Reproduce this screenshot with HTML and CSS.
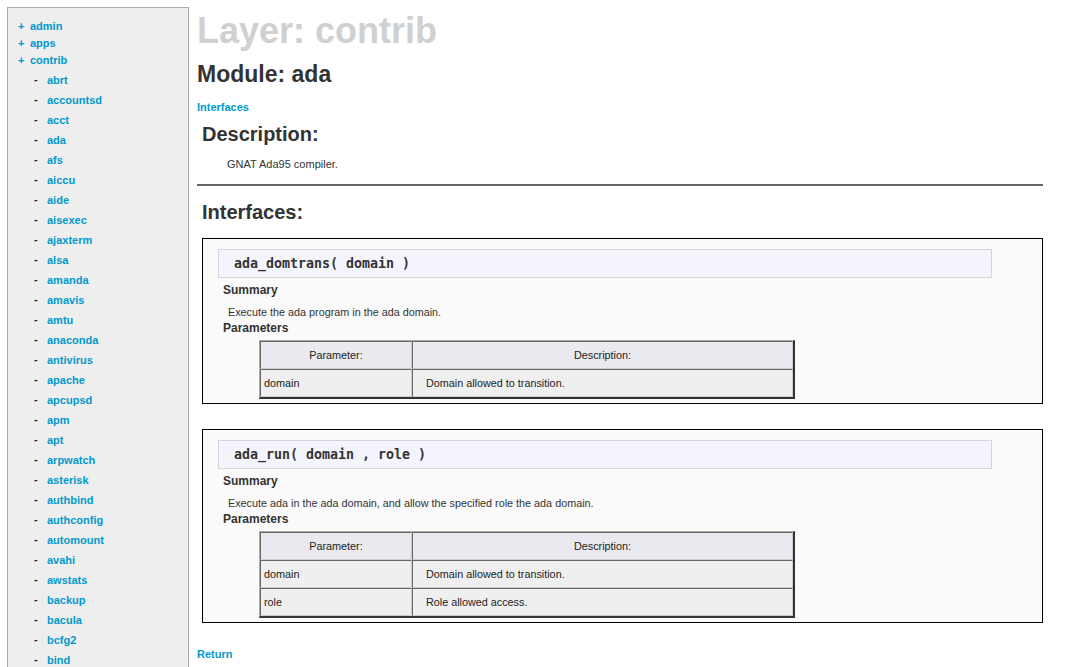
FILE: index.html
```
<!DOCTYPE html>
<html>
<head>
<meta charset="utf-8">
<title>Layer: contrib - Module: ada</title>
<link rel="stylesheet" href="styles.css">
</head>
<body>
<div class="page">
  <div class="nav">
    <ul class="top">
      <li><span class="plus">+</span><a href="#">admin</a></li>
      <li><span class="plus">+</span><a href="#">apps</a></li>
      <li><span class="plus">+</span><a href="#">contrib</a>
        <ul class="sub">
          <li><span class="dash">-</span><a href="#">abrt</a></li>
          <li><span class="dash">-</span><a href="#">accountsd</a></li>
          <li><span class="dash">-</span><a href="#">acct</a></li>
          <li><span class="dash">-</span><a href="#">ada</a></li>
          <li><span class="dash">-</span><a href="#">afs</a></li>
          <li><span class="dash">-</span><a href="#">aiccu</a></li>
          <li><span class="dash">-</span><a href="#">aide</a></li>
          <li><span class="dash">-</span><a href="#">aisexec</a></li>
          <li><span class="dash">-</span><a href="#">ajaxterm</a></li>
          <li><span class="dash">-</span><a href="#">alsa</a></li>
          <li><span class="dash">-</span><a href="#">amanda</a></li>
          <li><span class="dash">-</span><a href="#">amavis</a></li>
          <li><span class="dash">-</span><a href="#">amtu</a></li>
          <li><span class="dash">-</span><a href="#">anaconda</a></li>
          <li><span class="dash">-</span><a href="#">antivirus</a></li>
          <li><span class="dash">-</span><a href="#">apache</a></li>
          <li><span class="dash">-</span><a href="#">apcupsd</a></li>
          <li><span class="dash">-</span><a href="#">apm</a></li>
          <li><span class="dash">-</span><a href="#">apt</a></li>
          <li><span class="dash">-</span><a href="#">arpwatch</a></li>
          <li><span class="dash">-</span><a href="#">asterisk</a></li>
          <li><span class="dash">-</span><a href="#">authbind</a></li>
          <li><span class="dash">-</span><a href="#">authconfig</a></li>
          <li><span class="dash">-</span><a href="#">automount</a></li>
          <li><span class="dash">-</span><a href="#">avahi</a></li>
          <li><span class="dash">-</span><a href="#">awstats</a></li>
          <li><span class="dash">-</span><a href="#">backup</a></li>
          <li><span class="dash">-</span><a href="#">bacula</a></li>
          <li><span class="dash">-</span><a href="#">bcfg2</a></li>
          <li><span class="dash">-</span><a href="#">bind</a></li>
        </ul>
      </li>
    </ul>
  </div>
  <div class="main">
    <h1 class="layer">Layer: contrib</h1>
    <h2 class="module">Module: ada</h2>
    <a class="ifl" href="#">Interfaces</a>
    <h3 class="sect">Description:</h3>
    <p class="desc">GNAT Ada95 compiler.</p>
    <div class="rule"></div>
    <h3 class="sect sect2">Interfaces:</h3>

    <div class="iface">
      <div class="sig">ada_domtrans( domain )</div>
      <div class="label">Summary</div>
      <p class="summary">Execute the ada program in the ada domain.</p>
      <div class="label label2">Parameters</div>
      <table class="params">
        <tr><th class="c1">Parameter:</th><th class="c2">Description:</th></tr>
        <tr><td class="c1">domain</td><td class="c2">Domain allowed to transition.</td></tr>
      </table>
    </div>

    <div class="iface iface2">
      <div class="sig">ada_run( domain , role )</div>
      <div class="label">Summary</div>
      <p class="summary">Execute ada in the ada domain, and allow the specified role the ada domain.</p>
      <div class="label label2">Parameters</div>
      <table class="params">
        <tr><th class="c1">Parameter:</th><th class="c2">Description:</th></tr>
        <tr><td class="c1">domain</td><td class="c2">Domain allowed to transition.</td></tr>
        <tr><td class="c1">role</td><td class="c2">Role allowed access.</td></tr>
      </table>
    </div>

    <a class="ret" href="#">Return</a>
  </div>
</div>
</body>
</html>
```
FILE: styles.css
```
html, body {
  margin: 0;
  padding: 0;
  background: #fff;
  font-family: "Liberation Sans", Arial, sans-serif;
  color: #333;
}

a {
  color: #0099cc;
  text-decoration: none;
  font-weight: bold;
}

.page {
  display: flex;
  align-items: flex-start;
  gap: 8px;
  padding: 7px 0 0 7px;
}

/* sidebar */
.nav {
  width: 182px;
  box-sizing: border-box;
  border: 1px solid #aaa;
  background: #eee;
  padding: 10px 0 30px 10px;
  flex-shrink: 0;
}

.nav ul {
  list-style: none;
  margin: 0;
  padding: 0;
}

.top > li {
  font-size: 11px;
  line-height: 17px;
  font-weight: bold;
}

.plus {
  display: inline-block;
  width: 12px;
  color: #0099cc;
  font-weight: bold;
}

.sub {
  margin-top: 1px !important;
  padding-left: 16px !important;
}

.sub > li {
  line-height: 20px;
}

.dash {
  display: inline-block;
  width: 13px;
  color: #222;
  font-weight: bold;
  position: relative;
  top: -1px;
}

/* main */
.main {
  width: 846px;
  flex-shrink: 0;
}

.layer {
  margin: 4px 0 0;
  font-size: 36px;
  line-height: 40px;
  color: #d0d0d0;
  font-weight: bold;
}

.module {
  margin: 9px 0 0;
  font-size: 23px;
  line-height: 28px;
  color: #333;
  font-weight: bold;
}

.ifl {
  display: block;
  margin-top: 13px;
  font-size: 11px;
  line-height: 13px;
}

.sect {
  margin: 8px 0 0 5px;
  font-size: 20px;
  line-height: 24px;
  font-weight: bold;
  color: #333;
}

.sect2 {
  margin-top: 14px;
}

.desc {
  margin: 12px 0 0 30px;
  font-size: 11px;
  line-height: 13px;
}

.rule {
  margin-top: 13px;
  height: 2px;
  background: #666;
}

.iface {
  margin: 14px 0 0 5px;
  border: 1px solid #000;
  background: #fafafa;
  padding: 10px 0 4px 0;
}

.iface2 {
  margin-top: 25px;
}

.sig {
  margin-left: 15px;
  width: 774px;
  box-sizing: border-box;
  height: 29px;
  border: 1px solid #d4d4dc;
  background: #f4f4fd;
  padding-left: 15px;
  font-family: "DejaVu Sans Mono", monospace;
  font-weight: bold;
  font-size: 13.3px;
  line-height: 27px;
  color: #333;
}

.label {
  margin: 5px 0 0 20px;
  font-size: 12px;
  line-height: 14px;
  font-weight: bold;
  color: #333;
}

.label2 {
  margin-top: 2px;
}

.summary {
  margin: 9px 0 0 25px;
  font-size: 10.8px;
  line-height: 13px;
}

.params {
  margin: 5px 0 0 56px;
  width: 536px;
  border-collapse: separate;
  border-spacing: 0;
  border-style: solid;
  border-width: 1px 2px 2px 1px;
  border-color: #aaa #333 #333 #aaa;
  font-size: 10.8px;
}

.params th,
.params td {
  height: 28px;
  box-sizing: border-box;
  padding: 0;
  border-style: solid;
  border-width: 1px;
  border-color: #666 #ccc #ccc #666;
  font-weight: normal;
  color: #222;
}

.params th {
  background: #e9e9ef;
  text-align: center;
}

.params td {
  background: #efefef;
  text-align: left;
}

.params .c1 {
  width: 152px;
}

.params td.c1 {
  padding-left: 3px;
}

.params td.c2 {
  padding-left: 13px;
}

.ret {
  display: block;
  margin-top: 25px;
  font-size: 11px;
  line-height: 13px;
}
```
